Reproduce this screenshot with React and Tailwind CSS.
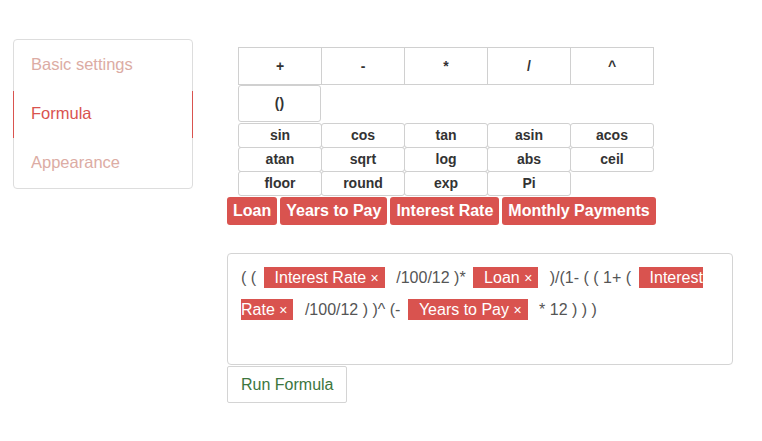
import React from 'react';

const ops = ['+', '-', '*', '/', '^'];
const fnRows = [
    ['sin', 'cos', 'tan', 'asin', 'acos'],
    ['atan', 'sqrt', 'log', 'abs', 'ceil'],
    ['floor', 'round', 'exp', 'Pi'],
];
const vars = ['Loan', 'Years to Pay', 'Interest Rate', 'Monthly Payments'];

function Tag({ children }) {
    return (
        <span className="bg-[#d9534f] text-white py-[2px] pl-[11px] pr-[6px] ml-[3px] mr-[7px]">
            {children} <span className="text-[14px]">×</span>
        </span>
    );
}

function Sidebar() {
    return (
        <div className="w-[180px] h-[150px] border border-[#dddddd] rounded-[4px] flex flex-col text-[16.5px]">
            <div className="h-[49px] flex items-center pl-[17px] text-[#dcaca4]">Basic settings</div>
            <div className="h-[47px] mt-[2px] flex items-center pl-[17px] pb-[3px] text-[#d9534f] border-x border-[#d9534f] -mx-px">Formula</div>
            <div className="h-[49px] flex items-center pl-[17px] text-[#dcaca4]">Appearance</div>
        </div>
    );
}

function App() {
    return (
        <div className="w-[762px] h-[441px] bg-white flex pt-[39px] pl-[13px]" style={{ fontFamily: '"Liberation Sans", Arial, sans-serif' }}>
            <Sidebar />

            <div className="ml-[34px] w-[506px] flex flex-col">
                {/* operator buttons */}
                <div className="ml-[11px] mt-[8px] flex flex-col text-[14px] font-bold text-[#333333]">
                    <div className="flex">
                        {ops.map((o, i) => (
                            <div key={o} className={`w-[84px] h-[38px] border border-[#d0d0d0] flex items-center justify-center ${i > 0 ? '-ml-px' : ''}`}>{o}</div>
                        ))}
                    </div>
                    <div className="flex">
                        <div className="w-[83px] h-[37px] border border-[#d0d0d0] rounded-[3px] flex items-center justify-center">()</div>
                    </div>
                    {fnRows.map((row, r) => (
                        <div key={r} className="flex">
                            {row.map((f, i) => (
                                <div key={f} className={`w-[84px] h-[25px] border border-[#d0d0d0] rounded-[3px] flex items-center justify-center ${i > 0 ? '-ml-px' : ''} ${r > 0 ? '-mt-px' : 'mt-px'}`}>{f}</div>
                            ))}
                        </div>
                    ))}
                </div>

                {/* variable buttons */}
                <div className="flex gap-[3px] mt-px">
                    {vars.map((v) => (
                        <div key={v} className="h-[28px] px-[6px] bg-[#d9534f] text-white font-bold text-[16px] rounded-[3px] flex items-center">{v}</div>
                    ))}
                </div>

                {/* formula editor */}
                <div className="mt-[28px] h-[112px] border border-[#d4d4d4] rounded-[4px] pt-[8px] pl-[13px] pr-[12px] text-[16px] leading-[32px] text-[#555555]">
                    ( ( <Tag>Interest Rate</Tag> /100/12 )* <Tag>Loan</Tag> )/(1- ( ( 1+ ( <Tag>Interest Rate</Tag> /100/12 ) )^ (- <Tag>Years to Pay</Tag> * 12 ) ) )
                </div>

                <div className="mt-px w-[120px] h-[37px] border border-[#d4d4d4] rounded-[2px] flex items-center pl-[13px] text-[16px] text-[#3c763d]">Run Formula</div>
            </div>
        </div>
    );
}

export default App;
